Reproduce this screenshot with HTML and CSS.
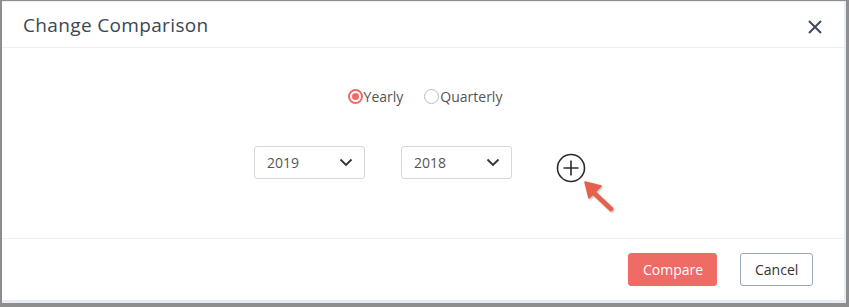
FILE: index.html
```html
<!DOCTYPE html>
<html lang="en">
<head>
    <meta charset="UTF-8">
    <meta name="viewport" content="width=device-width, initial-scale=1.0">
    <title>Change Comparison</title>
    <link rel="stylesheet" href="styles.css">
</head>
<body>
    <div class="frame">
        <div class="modal">
            <div class="modal-header">
                <h2>Change Comparison</h2>
                <button class="close" type="button" aria-label="Close">
                    <svg width="14" height="14" viewBox="0 0 14 14"><path d="M1 1L13 13M13 1L1 13" stroke="#3d4a5c" stroke-width="2" fill="none"/></svg>
                </button>
            </div>

            <div class="modal-body">
                <div class="radio-row">
                    <label class="radio checked"><span class="dot"></span>Yearly</label>
                    <label class="radio"><span class="dot"></span>Quarterly</label>
                </div>

                <div class="select-row">
                    <div class="select">
                        <span>2019</span>
                        <svg width="14" height="9" viewBox="0 0 14 9"><path d="M1.5 1.5L7 7L12.5 1.5" stroke="#333" stroke-width="1.8" fill="none"/></svg>
                    </div>
                    <div class="select">
                        <span>2018</span>
                        <svg width="14" height="9" viewBox="0 0 14 9"><path d="M1.5 1.5L7 7L12.5 1.5" stroke="#333" stroke-width="1.8" fill="none"/></svg>
                    </div>
                    <div class="add">
                        <svg width="30" height="30" viewBox="0 0 30 30"><circle cx="15" cy="15" r="13.5" stroke="#2b2b2b" stroke-width="1.6" fill="none"/><path d="M15 7.5V22.5M7.5 15H22.5" stroke="#2b2b2b" stroke-width="1.6"/></svg>
                        <svg class="pointer" width="40" height="40" viewBox="0 0 40 40"><g class="arrow"><path d="M32 32L15 16" stroke="#e5604d" stroke-width="4.5" stroke-linecap="round"/><path d="M6 5L22 9L10 21Z" fill="#e5604d" stroke="#e5604d" stroke-width="1.5" stroke-linejoin="round"/></g></svg>
                    </div>
                </div>
            </div>

            <div class="modal-footer">
                <button class="btn btn-primary" type="button">Compare</button>
                <button class="btn btn-default" type="button">Cancel</button>
            </div>
        </div>
    </div>
</body>
</html>
```

FILE: styles.css
```css
body {
    margin: 0;
    font-family: "Open Sans", Arial, sans-serif;
    background: #fff;
}
.frame {
    width: 849px;
    height: 307px;
    box-sizing: border-box;
    border: 2px solid #8e8e8e;
    border-top-width: 1px;
    border-right-width: 3px;
    border-bottom-width: 4px;
}
.modal {
    height: 100%;
    box-sizing: border-box;
    background: #fff;
    border-right: 2px solid #e6ecf4;
    border-bottom: 3px solid #e6ecf4;
    display: flex;
    flex-direction: column;
}
.modal-header {
    height: 45px;
    border-top: 1px solid #eef0f3;
    border-bottom: 1px solid #eceff3;
    display: flex;
    align-items: center;
    justify-content: space-between;
    padding: 0 22px 0 21px;
}
.modal-header h2 {
    margin: 0;
    font-size: 19px;
    letter-spacing: 0.35px;
    font-weight: normal;
    color: #3b4656;
}
.close {
    border: none;
    background: none;
    padding: 0;
    width: 14px;
    height: 14px;
    margin-top: 4px;
}
.modal-body {
    height: 191px;
    box-sizing: border-box;
    padding-top: 38px;
    border-bottom: 1px solid #eff1f4;
}
.radio-row {
    display: flex;
    justify-content: center;
    gap: 21px;
    height: 20px;
    padding-left: 4px;
}
.radio {
    display: flex;
    align-items: center;
    font-size: 14px;
    color: #555;
    gap: 1px;
}
.dot {
    width: 15px;
    height: 15px;
    border: 1px solid #bdbdbd;
    border-radius: 50%;
    box-sizing: border-box;
    position: relative;
}
.radio.checked .dot {
    border: 2px solid #ef6b66;
}
.radio.checked .dot::after {
    content: "";
    position: absolute;
    left: 2px;
    top: 2px;
    width: 7px;
    height: 7px;
    border-radius: 50%;
    background: #ef6b66;
}
.select-row {
    display: flex;
    align-items: flex-start;
    margin-top: 40px;
    padding-left: 252px;
    gap: 36px;
}
.select {
    width: 111px;
    height: 33px;
    box-sizing: border-box;
    border: 1px solid #d6d6d6;
    border-radius: 3px;
    display: flex;
    align-items: center;
    justify-content: space-between;
    padding: 0 11px 0 12px;
    font-size: 14px;
    color: #555;
}
.add {
    position: relative;
    margin-left: 8px;
    margin-top: 7px;
}
.add svg {
    display: block;
}
.pointer {
    position: absolute;
    left: 23px;
    top: 24px;
}
.arrow {
    filter: drop-shadow(1px 1px 1px rgba(0, 0, 0, 0.3));
}
.modal-footer {
    flex: 1;
    display: flex;
    justify-content: flex-end;
    align-items: flex-start;
    gap: 23px;
    padding: 14px 31px 0 0;
}
.btn {
    height: 33px;
    box-sizing: border-box;
    border-radius: 3px;
    font-family: "Open Sans", Arial, sans-serif;
    font-size: 14px;
    padding: 0 14px;
}
.btn-primary {
    width: 89px;
    background: #ef6b66;
    border: 1px solid #ef6b66;
    color: #fff;
}
.btn-default {
    width: 73px;
    background: #fff;
    border: 1px solid #9aa8bd;
    color: #333;
}
```
